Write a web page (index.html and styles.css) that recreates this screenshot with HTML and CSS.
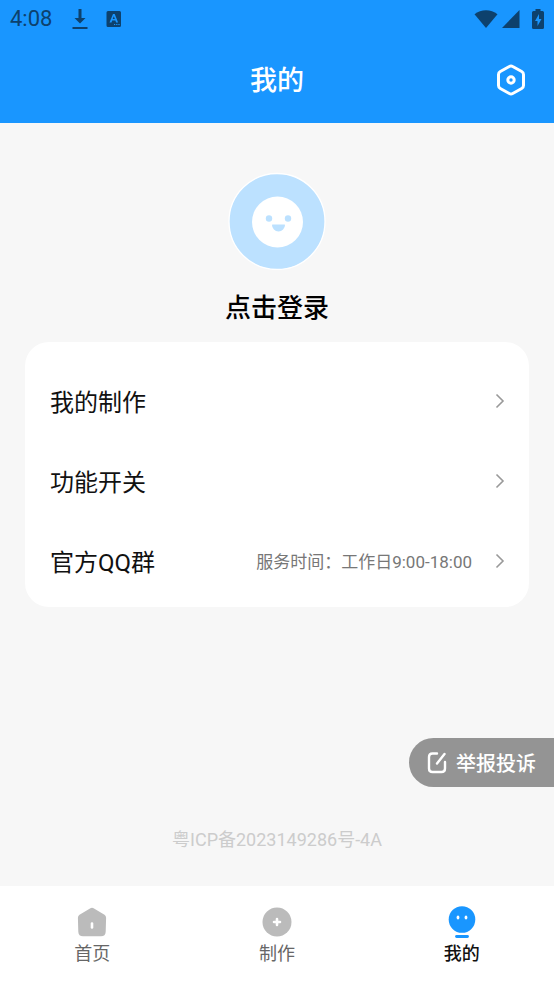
FILE: index.html
```html
<!DOCTYPE html>
<html lang="zh-CN">
<head>
<meta charset="utf-8">
<meta name="viewport" content="width=device-width, initial-scale=1">
<title>我的</title>
<link rel="stylesheet" href="styles.css">
</head>
<body>
<div class="status-bar">
  <span class="clock">4:08</span>
  <svg class="download" width="16" height="22" viewBox="0 0 16 22"><path d="M6.500 1h3v9h4L8 15.500 2.500 10h4z"/><path d="M.5 19h15v2H.5z"/></svg>
  <svg class="input-method" width="16" height="18" viewBox="0 0 16 18"><path fill-rule="evenodd" d="M2 1h11.500a1.500 1.500 0 0 1 1.500 1.500v13a1.500 1.500 0 0 1-1.500 1.500H2A1.500 1.500 0 0 1 .5 15.500v-13A1.500 1.500 0 0 1 2 1zM7 4 3.500 12.500h2l.7-2h3.200l.7 2h2L8.700 4zM7.800 6.200 8.900 9H6.700zM8 14v1h1.200v-1zm2.200 0v1h1.200v-1zm2.200 0v1h1.200v-1z"/></svg>
  <span class="spacer"></span>
  <svg width="24" height="20" viewBox="0 0 24 20"><path d="M.5 5.200C7-.2 17-.2 23.500 5.200L12 19z"/></svg>
  <svg class="signal" width="18" height="18" viewBox="0 0 18 18"><path d="M17.500 0v18H0z"/></svg>
  <svg class="battery" width="12" height="20" viewBox="0 0 12 20"><path fill-rule="evenodd" d="M3.500 0h5v2h2A1.500 1.500 0 0 1 12 3.500v15a1.500 1.500 0 0 1-1.500 1.500h-9A1.500 1.500 0 0 1 0 18.500v-15A1.500 1.500 0 0 1 1.500 2h2zM7 5l-4 7h2.500v5l4-7H7z"/></svg>
</div>
<header class="header">
  <h1>我的</h1>
  <button class="settings" aria-label="设置">
    <svg width="32" height="34" viewBox="0 0 32 34" fill="none" stroke="#fff" stroke-width="3" stroke-linejoin="round"><path d="M14.300 2.500q1.700-1 3.400 0l9 5q1.800 1 1.800 3v11q0 2-1.800 3l-9 5q-1.700 1-3.400 0l-9-5q-1.800-1-1.800-3v-11q0-2 1.800-3z"/><circle cx="16" cy="16" r="3.200"/></svg>
  </button>
</header>
<main class="content">
  <button class="profile">
    <svg width="98" height="98" viewBox="0 0 98 98"><circle cx="49" cy="49.500" r="48" fill="#bce1ff" stroke="#fff" stroke-width="1.300"/><circle cx="49.500" cy="50" r="25.500" fill="#fff"/><g fill="#bce1ff"><circle cx="41" cy="46.500" r="3.200"/><circle cx="60" cy="46.500" r="3.200"/><path d="M44.500 52.500h12q.5 0 .5.500a6.200 6.200 0 0 1-13 0q0-.5.500-.5z"/></g></svg>
    <span>点击登录</span>
  </button>
  <nav class="menu">
    <a href="#works"><span class="label">我的制作</span><svg width="10" height="16" viewBox="0 0 10 16"><path d="m1.500 1.500 6.500 6.500-6.500 6.500"/></svg></a>
    <a href="#features"><span class="label">功能开关</span><svg width="10" height="16" viewBox="0 0 10 16"><path d="m1.500 1.500 6.500 6.500-6.500 6.500"/></svg></a>
    <a href="#group"><span class="label">官方QQ群</span><span class="note">服务时间：工作日9:00-18:00</span><svg width="10" height="16" viewBox="0 0 10 16"><path d="m1.500 1.500 6.500 6.500-6.500 6.500"/></svg></a>
  </nav>
  <button class="report">
    <svg width="20" height="24" viewBox="0 0 20 24" fill="none" stroke="#fff" stroke-width="2.400" stroke-linecap="round" stroke-linejoin="round"><path d="M10 2.500H5.500Q2 2.500 2 6v11.500Q2 21 5.500 21h9q3.500 0 3.500-3.500V11"/><path d="M10 12.500 17.500 3"/></svg>
    <span>举报投诉</span>
  </button>
  <p class="record">粤ICP备2023149286号-4A</p>
</main>
<nav class="tabs">
  <a href="#home">
    <svg width="32" height="34" viewBox="0 0 32 34"><path fill="#bbb" d="M14 3.500q2-1.400 4 0l10.500 6.200q1.500 1 1.600 3l-.4 14q-.2 4.500-4.700 4.500H7q-4.500 0-4.700-4.500l-.4-14q.1-2 1.600-3z"/><path d="M16 18.500v4" stroke="#fff" stroke-width="2.600" stroke-linecap="round"/></svg>
    <span>首页</span>
  </a>
  <a href="#create">
    <svg width="32" height="34" viewBox="0 0 32 34"><circle cx="16" cy="17" r="14.500" fill="#bbb"/><path d="M16 14v6m-3-3h6" stroke="#fff" stroke-width="2.600" stroke-linecap="round"/></svg>
    <span>制作</span>
  </a>
  <a href="#me" class="active" aria-current="page">
    <svg width="32" height="34" viewBox="0 0 32 34"><circle cx="16" cy="14.500" r="13.300" fill="#1996ff"/><path d="M10.500 31.500h11" stroke="#1996ff" stroke-width="2.800" stroke-linecap="round"/><ellipse cx="12" cy="12.500" rx="1.400" ry="2" fill="#fff"/><ellipse cx="20" cy="12.500" rx="1.400" ry="2" fill="#fff"/></svg>
    <span>我的</span>
  </a>
</nav>
</body>
</html>
```
FILE: styles.css
```css
* {
  box-sizing: border-box;
}

body {
  margin: 0;
  min-height: 100vh;
  display: flex;
  flex-direction: column;
  background: #f7f7f7;
  color: #111;
  font-family: Roboto, "Noto Sans CJK SC", sans-serif;
}

svg {
  display: block;
  flex: none;
}

a {
  color: inherit;
  text-decoration: none;
}

button {
  border: 0;
  padding: 0;
  background: none;
  font: inherit;
  color: inherit;
}

.status-bar {
  display: flex;
  align-items: center;
  height: 38px;
  padding: 0 10px;
  background: #1996ff;
  color: #0d416d;
  fill: #0d416d;
}

.clock {
  font-size: 22px;
  line-height: 38px;
}

.download {
  margin-left: 20px;
}

.input-method {
  margin-left: 18px;
}

.spacer {
  flex: 1;
}

.signal {
  margin-left: 4px;
}

.battery {
  margin-left: 12px;
}

.header {
  display: grid;
  grid-template-columns: 1fr auto 1fr;
  align-items: center;
  height: 85px;
  padding: 0 27px;
  background: #1996ff;
  color: #fff;
}

h1 {
  grid-column: 2;
  margin: 0;
  font-size: 27px;
  line-height: 42px;
  font-weight: 500;
}

.settings {
  justify-self: end;
}

.content {
  flex: 1;
  display: flex;
  flex-direction: column;
  padding-top: 49px;
}

.profile {
  align-self: center;
  display: flex;
  flex-direction: column;
  align-items: center;
  gap: 19px;
  color: #000;
  font-size: 26px;
  line-height: 38px;
  font-weight: 500;
}

.menu {
  margin: 15px 25px 0;
  padding: 19px 24px 6px 25px;
  border-radius: 24px;
  background: #fff;
}

.menu a {
  display: flex;
  align-items: center;
  height: 80px;
}

.menu svg {
  fill: none;
  stroke: #999;
  stroke-width: 1.600;
}

.label,
.note {
  padding-bottom: 2px;
}

.label {
  flex: 1;
  font-size: 24px;
}

.note {
  margin-right: 23px;
  font-size: 17px;
  color: #777;
}

.report {
  align-self: flex-end;
  display: flex;
  align-items: center;
  gap: 9px;
  height: 49px;
  margin-top: auto;
  padding: 0 18px;
  border-radius: 25px 0 0 25px;
  background: #949494;
  color: #fff;
  font-size: 20px;
  font-weight: 500;
}

.record {
  margin: 40px 0 33px;
  text-align: center;
  font-size: 18px;
  line-height: 26px;
  color: #ccc;
}

.tabs {
  display: grid;
  grid-template-columns: repeat(3, 1fr);
  height: 98px;
  padding-top: 19px;
  background: #fff;
}

.tabs a {
  display: flex;
  flex-direction: column;
  align-items: center;
  gap: 2px;
  font-size: 18px;
  line-height: 26px;
  color: #666;
}

.tabs .active {
  color: #111;
  font-weight: 500;
}
```
